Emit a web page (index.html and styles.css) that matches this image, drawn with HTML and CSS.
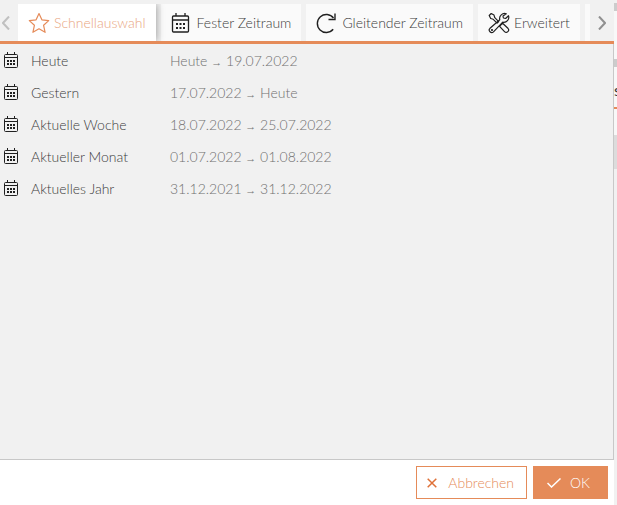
FILE: index.html
```html
<!DOCTYPE html>
<html lang="de">

<head>
    <meta charset="utf-8">
    <meta name="viewport" content="width=device-width, initial-scale=1.0">
    <title>Zeitraum</title>
    <link rel="stylesheet" href="styles.css">
</head>

<body>
    <!-- Icons -->
    <svg class="symbols" aria-hidden="true">
        <symbol id="calendar" viewBox="0 0 22 22">
            <rect x="1.500" y="4" width="16" height="16" rx="1" fill="none" stroke="currentColor" stroke-width="1.3" />
            <path d="M1.500 8h16M5 1v3M14 1v3" fill="none" stroke="currentColor" stroke-width="1.3" />
            <path d="M5 11h2v2H5zM8.500 11h2v2h-2zM12 11h2v2h-2zM5 15h2v2H5zM8.500 15h2v2h-2zM12 15h2v2h-2z" fill="currentColor" />
        </symbol>
        <symbol id="calendar-small" viewBox="0 0 14 16">
            <rect x=".5" y="2.500" width="13" height="13" rx="1" fill="none" stroke="currentColor" />
            <path d="M.5 5.500h13M3.500 0v3M10.500 0v3" fill="none" stroke="currentColor" />
            <path d="M3 8h2v2H3zM6 8h2v2H6zM9 8h2v2H9zM3 11h2v2H3zM6 11h2v2H6zM9 11h2v2H9z" fill="currentColor" />
        </symbol>
    </svg>

    <div class="page">
        <main class="dialog">
            <nav class="tabs">
                <button class="scroll" type="button" aria-label="Zurück">
                    <svg width="8" height="14" viewBox="0 0 8 14"><path d="M7 .5 1 7l6 6.500" /></svg>
                </button>
                <div class="tab-list">
                    <button class="tab active" type="button">
                        <svg class="tab-icon" viewBox="0 0 22 22"><path d="m11 1.500 2.900 6.300 6.800.8-5.100 4.700 1.500 7L11 16.800l-6.100 3.500 1.500-7L1.300 8.600l6.800-.8z" fill="none" stroke="currentColor" stroke-width="1.200" stroke-linejoin="round" /></svg>
                        Schnellauswahl
                    </button>
                    <button class="tab" type="button">
                        <svg class="tab-icon"><use href="#calendar" /></svg>
                        Fester Zeitraum
                    </button>
                    <button class="tab" type="button">
                        <svg class="tab-icon" viewBox="0 0 22 22"><path d="M17.200 17.300A9 9 0 1 1 17.500 6M19 1.500v6h-6.500" fill="none" stroke="currentColor" stroke-width="1.400" /></svg>
                        Gleitender Zeitraum
                    </button>
                    <button class="tab" type="button">
                        <svg class="tab-icon" viewBox="0 0 22 22">
                            <g fill="none" stroke="currentColor" stroke-width="1.200" stroke-linejoin="round">
                                <path d="m3.200 1.500-2 2 1.500 3 2.500.8 3.900 3.900 1.600-1.600L6.800 5.700 6 3.100z" />
                                <path d="m13 12.800 1.600-1.600 5.300 5.100a2.300 2.300 0 0 1-3.400 3.300l-4.900-5.200z" />
                                <path d="M18.300 1.800a5 5 0 0 0-6.500 6L2 16.300a2.400 2.400 0 0 0 3.500 3.500l9.200-9.600a5 5 0 0 0 5.800-6.500l-2.900 2.800-2.200-.5-.4-2z" />
                                <circle cx="4" cy="18" r=".5" />
                            </g>
                        </svg>
                        Erweitert
                    </button>
                    <span class="tab next"></span>
                </div>
                <button class="scroll forward" type="button" aria-label="Weiter">
                    <svg width="8" height="14" viewBox="0 0 8 14"><path d="m1 .5 6 6.500-6 6.500" /></svg>
                </button>
            </nav>

            <ul class="ranges">
                <li><button class="range" type="button"><svg class="range-icon"><use href="#calendar-small" /></svg><span>Heute</span><span class="dates">Heute <span class="arrow">→</span> 19.07.2022</span></button></li>
                <li><button class="range" type="button"><svg class="range-icon"><use href="#calendar-small" /></svg><span>Gestern</span><span class="dates">17.07.2022 <span class="arrow">→</span> Heute</span></button></li>
                <li><button class="range" type="button"><svg class="range-icon"><use href="#calendar-small" /></svg><span>Aktuelle Woche</span><span class="dates">18.07.2022 <span class="arrow">→</span> 25.07.2022</span></button></li>
                <li><button class="range" type="button"><svg class="range-icon"><use href="#calendar-small" /></svg><span>Aktueller Monat</span><span class="dates">01.07.2022 <span class="arrow">→</span> 01.08.2022</span></button></li>
                <li><button class="range" type="button"><svg class="range-icon"><use href="#calendar-small" /></svg><span>Aktuelles Jahr</span><span class="dates">31.12.2021 <span class="arrow">→</span> 31.12.2022</span></button></li>
            </ul>

            <footer class="actions">
                <button class="btn cancel" type="button">
                    <svg width="10" height="10" viewBox="0 0 10 10"><path d="m.7.7 8.600 8.600M9.300.7.7 9.300" /></svg>
                    Abbrechen
                </button>
                <button class="btn ok" type="button">
                    <svg width="14" height="10" viewBox="0 0 14 10"><path d="m.5 5 4 4 9-8.500" /></svg>
                    OK
                </button>
            </footer>
        </main>

        <!-- Visible edge of the page behind the dialog -->
        <div class="behind">
            <div class="behind-bar"></div>
            <div class="behind-panel"></div>
            <div class="behind-bar"></div>
            <div class="behind-title">s</div>
            <div class="behind-panel small"></div>
            <div class="behind-bar large"></div>
        </div>
    </div>
</body>

</html>
```

FILE: styles.css
```css
* {
    box-sizing: border-box;
}

body {
    margin: 0;
    background-color: #f1f1f1;
    color: #3c3c3c;
    font-family: Lato, "Liberation Sans", sans-serif;
    font-size: 14px;
    font-weight: 300;
    line-height: 20px;
}

button {
    margin: 0;
    padding: 0;
    border: none;
    background: none;
    color: inherit;
    font: inherit;
    cursor: pointer;
}

.symbols {
    position: absolute;
    width: 0;
    height: 0;
}

.page {
    display: flex;
    min-height: 100vh;
}

.dialog {
    flex: 1;
    min-width: 0;
    display: flex;
    flex-direction: column;
}

/* Tabs */
.tabs {
    display: flex;
    height: 44px;
    padding-top: 4px;
    border-bottom: 3px solid #e58b59;
}

.scroll {
    display: flex;
    align-items: center;
    width: 18px;
    padding-left: 2px;
}

.scroll svg {
    fill: none;
    stroke: #c0c0c0;
    stroke-width: 2;
}

.scroll.forward {
    width: 24px;
    padding-left: 8px;
}

.scroll.forward svg {
    stroke: #909090;
}

.tab-list {
    flex: 1;
    min-width: 0;
    display: flex;
    gap: 5px;
    overflow: hidden;
}

.tab {
    flex-shrink: 0;
    display: flex;
    align-items: center;
    gap: 4px;
    padding: 0 10px;
    background-color: #fafafa;
    white-space: nowrap;
}

.tab.active {
    position: relative;
    background-color: #fff;
    color: #e9a580;
    box-shadow: 0 0 8px rgba(0, 0, 0, 0.4);
}

.tab-icon {
    width: 22px;
    height: 22px;
    color: #202020;
}

.active .tab-icon {
    color: #e58b59;
}

/* Ranges */
.ranges {
    flex: 1;
    margin: 0;
    padding: 1px 0 0;
    list-style: none;
    border-right: 1px solid #c8c8c8;
    border-bottom: 1px solid #c8c8c8;
}

.range {
    display: grid;
    grid-template-columns: 27px 139px 1fr;
    align-items: center;
    width: 100%;
    height: 32px;
    padding-left: 4px;
    text-align: left;
}

.range-icon {
    width: 14px;
    height: 16px;
    margin-bottom: 2px;
    color: #202020;
}

.dates {
    color: #707070;
}

.arrow {
    font-family: "Liberation Sans", sans-serif;
    font-size: 11px;
}

/* Buttons */
.actions {
    display: flex;
    justify-content: flex-end;
    gap: 6px;
    padding: 6px;
    background-color: #fff;
}

.btn {
    display: flex;
    align-items: center;
    height: 33px;
    border: 1px solid #e58b59;
}

.btn svg {
    fill: none;
    stroke: currentColor;
}

.cancel {
    gap: 11px;
    padding: 0 12px 0 10px;
    color: #e58b59;
}

.cancel svg {
    stroke: #df7138;
    stroke-width: 1.5;
}

.ok {
    gap: 9px;
    padding: 0 17px 0 13px;
    background-color: #e58b59;
    color: #fff;
}

.ok svg {
    stroke-width: 1.5;
}

/* Page behind */
.behind {
    width: 3px;
    padding-top: 3px;
    overflow: hidden;
}

.behind-bar {
    height: 8px;
    background-color: #ccc;
}

.behind-bar.large {
    height: 34px;
    background-color: #dcdcdc;
}

.behind-panel {
    height: 48px;
    background-color: #f8f8f8;
}

.behind-title {
    height: 42px;
    padding-top: 13px;
    border-bottom: 2px solid #e58b59;
    background-color: #f8f8f8;
    font-size: 16px;
    font-weight: 400;
}

.behind-panel.small {
    height: 26px;
}
```
